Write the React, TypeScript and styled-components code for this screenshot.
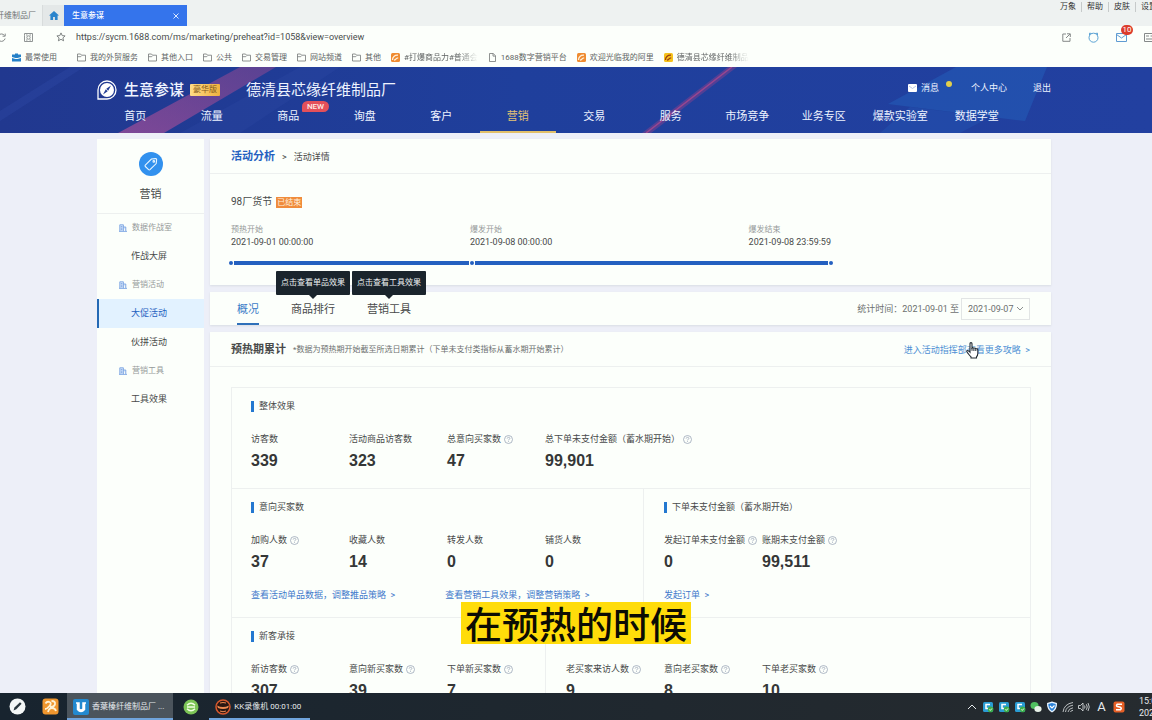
import React from "react";
import styled, { createGlobalStyle, css } from "styled-components";

const color = {
  card: "#fcfffb",
  page: "#edeff8",
  line: "#edf0ef",
  blue: "#2460c0",
  link: "#3f79cb",
  accent: "#2478d0",
  text: "#484a4a",
  muted: "#969a9a",
};

const GlobalStyle = createGlobalStyle`
  *, *::before, *::after { box-sizing: border-box; }
  html, body, #root { height: 100%; }
  body {
    margin: 0;
    overflow: hidden;
    font-family: Roboto, "Noto Sans CJK SC", sans-serif;
    font-size: 9px;
    line-height: 12px;
    color: ${color.text};
    background: ${color.page};
  }
  button, input, select { font: inherit; color: inherit; border: 0; padding: 0; margin: 0; background: none; }
  a { color: inherit; text-decoration: none; }
  h1, h2, h3, p, ul, dl, dd { margin: 0; padding: 0; font-size: inherit; font-weight: inherit; list-style: none; }
  svg { display: block; flex: none; }
`;

const Screen = styled.div`
  position: relative;
  display: flex;
  flex-direction: column;
  height: 100vh;
  overflow: hidden;
`;

/* ---------- browser chrome ---------- */

const TabStrip = styled.div`
  flex: none;
  display: flex;
  align-items: flex-end;
  height: 26px;
  overflow: hidden;
  font-size: 8px;
  background: #eef2f1;
`;

const BrowserTab = styled.button<{ $active?: boolean }>`
  display: flex;
  align-items: center;
  justify-content: space-between;
  height: 21px;
  padding: 0 8px;
  white-space: nowrap;
  ${(p) =>
    p.$active
      ? css`
          width: 123px;
          color: #fff;
          font-weight: 500;
          background: #3474ec;
        `
      : css`
          color: #6c7070;
        `}
`;

const ClippedTab = styled(BrowserTab)`
  width: 42px;
  justify-content: flex-end;
  padding: 0 6px 0 0;
`;

const HomeTab = styled(BrowserTab)`
  width: 22px;
  padding: 0;
  justify-content: center;
  background: #e4e8e8;
  border-left: 1px solid #d8dcdc;
`;

const MenuLinks = styled.div`
  display: flex;
  align-self: flex-start;
  align-items: center;
  margin: 2px -10px 0 auto;
  color: #333;
  button {
    padding: 0 5px;
    line-height: 10px;
    white-space: nowrap;
  }
  button + button {
    border-left: 1px solid #c6caca;
  }
`;

const AddressBar = styled.div`
  flex: none;
  display: flex;
  align-items: center;
  height: 22px;
  background: ${color.card};
`;

const BarIcons = styled.div`
  display: flex;
  align-items: center;
  gap: 18px;
  margin-left: -3px;
  color: #858989;
`;

const BarTools = styled(BarIcons)`
  gap: 17px;
  margin: 0 -2px 0 0;
`;

const StarButton = styled.button`
  margin-left: 23px;
`;

const UrlInput = styled.input`
  flex: 1;
  min-width: 0;
  height: 16px;
  padding-left: 10px;
  color: #484c4c;
  outline: 0;
`;

const MailButton = styled.button`
  position: relative;
  color: #5f9bd2;
`;

const MailBadge = styled.span`
  position: absolute;
  left: 5px;
  top: -8px;
  width: 12px;
  height: 10px;
  border-radius: 5px;
  font-size: 8px;
  line-height: 10px;
  color: #fff;
  background: #dc3c2c;
`;

const Bookmarks = styled.nav`
  flex: none;
  display: flex;
  align-items: center;
  gap: 10px;
  height: 19px;
  padding: 0 0 0 12px;
  font-size: 8px;
  color: #606464;
  background: ${color.card};
`;

const Bookmark = styled.a<{ $first?: boolean; $faded?: boolean }>`
  display: flex;
  align-items: center;
  gap: 4px;
  white-space: nowrap;
  ${(p) => p.$first && "margin-right: 10px;"}
  ${(p) =>
    p.$faded &&
    css`
      max-width: 90px;
      overflow: hidden;
      mask-image: linear-gradient(90deg, #000 76%, transparent);
    `}
`;

/* ---------- site header ---------- */

const Header = styled.header`
  position: relative;
  flex: none;
  height: 66px;
  padding-right: 4px;
  color: #eef3ff;
  background: linear-gradient(90deg, #21388f, #1f3f9c 45%, #2240a0);
`;

const HeaderArt = styled.svg`
  position: absolute;
  inset: 0;
  width: 100%;
  height: 100%;
`;

const Container = styled.div`
  position: relative;
  width: 100%;
  max-width: 954px;
  margin: 0 auto;
`;

const BrandRow = styled.div`
  display: flex;
  align-items: center;
  height: 33px;
  padding-top: 13px;
`;

const Brand = styled.h1`
  display: flex;
  align-items: center;
  gap: 7px;
  font-size: 15px;
  font-weight: 500;
  line-height: 20px;
`;

const EditionTag = styled.span`
  height: 12px;
  margin: 0 26px 0 6px;
  padding: 0 3px;
  border-radius: 1px;
  font-size: 8px;
  color: #83591a;
  background: linear-gradient(90deg, #ffdc86, #f0b13f);
`;

const ShopName = styled.span`
  font-size: 15px;
  line-height: 20px;
`;

const AccountLinks = styled.nav`
  display: flex;
  align-items: center;
  gap: 26px;
  margin: -4px 0 0 auto;
  a {
    display: flex;
    gap: 4px;
    align-items: center;
  }
`;

const UnreadDot = styled.i`
  width: 6px;
  height: 6px;
  margin: -9px -7px 0 3px;
  border-radius: 50%;
  background: #e2cf4b;
`;

const MainNav = styled.nav`
  display: flex;
  height: 33px;
  padding-right: 36px;
`;

const NavLink = styled.a<{ $active?: boolean }>`
  position: relative;
  flex: 1;
  font-size: 11px;
  line-height: 34px;
  text-align: center;
  white-space: nowrap;
  ${(p) => p.$active && "color: #e4c374; box-shadow: inset 0 -2px #e2c06a;"}
`;

const NewBadge = styled.span`
  position: absolute;
  left: 52px;
  top: 1px;
  width: 27px;
  height: 11px;
  border-radius: 6px 6px 6px 1px;
  font-size: 8px;
  line-height: 11px;
  font-weight: 500;
  color: #ffe9e4;
  background: #e4505a;
`;

/* ---------- page body ---------- */

const Viewport = styled.main`
  flex: 1;
  min-height: 0;
  overflow: hidden;
  padding: 6px 4px 0 0;
`;

const Columns = styled(Container)`
  display: flex;
  align-items: stretch;
  gap: 6px;
`;

const Sidebar = styled.aside`
  flex: none;
  width: 107px;
  background: ${color.card};
`;

const SidebarHead = styled.div`
  display: flex;
  flex-direction: column;
  align-items: center;
  gap: 11px;
  height: 75px;
  padding-top: 13px;
  border-bottom: 1px solid ${color.line};
  font-size: 11px;
  line-height: 16px;
`;

const RoundIcon = styled.span`
  display: grid;
  place-items: center;
  width: 24px;
  height: 24px;
  border-radius: 50%;
  color: #e8f6ff;
  background: #3291ee;
`;

const SideGroup = styled.h3`
  display: flex;
  align-items: center;
  gap: 5px;
  height: 28px;
  padding-left: 22px;
  font-size: 8px;
  color: ${color.muted};
`;

const SideLink = styled.a<{ $active?: boolean }>`
  display: block;
  height: 29px;
  padding-left: 34px;
  line-height: 29px;
  ${(p) =>
    p.$active &&
    css`
      color: ${color.blue};
      background: #e2f2ff;
      box-shadow: inset 2px 0 #2468b4;
    `}
`;

const Main = styled.div`
  flex: 1;
  min-width: 0;
  display: flex;
  flex-direction: column;
  gap: 7px;
`;

const Card = styled.section`
  background: ${color.card};
  box-shadow: 0 1px 2px #d9dde4;
`;

const CardHead = styled.div`
  display: flex;
  align-items: center;
  gap: 7px;
  height: 35px;
  padding: 2px 21px 0;
  border-bottom: 1px solid ${color.line};
`;

const Crumb = styled.a`
  font-size: 11px;
  font-weight: 700;
  color: ${color.blue};
`;

const EventBody = styled.div`
  padding: 21px 20px 20px 21px;
`;

const EventTitle = styled.h2`
  display: flex;
  align-items: center;
  gap: 4px;
  height: 14px;
  font-size: 10px;
`;

const EndedTag = styled.span`
  height: 11px;
  padding: 0 1px;
  font-size: 8px;
  line-height: 11px;
  color: #fff1df;
  background: #f08c3c;
`;

const Timeline = styled.div`
  width: 75%;
  margin-top: 14px;
`;

const Stages = styled.ol`
  display: flex;
  margin: 0;
  padding: 0;
  list-style: none;
`;

const Stage = styled.li<{ $share: number }>`
  flex: ${(p) => p.$share} 1 0;
  white-space: nowrap;
  line-height: 13px;
  small {
    display: block;
    font-size: 8px;
    color: ${color.muted};
  }
`;

const LastStage = styled(Stage)`
  flex: none;
`;

const Track = styled.div`
  display: flex;
  align-items: center;
  gap: 1px;
  margin: 12px -2px 0;
`;

const TrackDot = styled.i`
  width: 4px;
  height: 4px;
  border-radius: 50%;
  background: ${color.blue};
`;

const TrackBar = styled.i<{ $share: number }>`
  flex: ${(p) => p.$share};
  height: 4px;
  background: ${color.blue};
`;

const TabsCard = styled(Card)`
  display: flex;
  align-items: center;
  height: 33px;
  padding: 0 21px 0 27px;
`;

const Tabs = styled.div`
  display: flex;
  gap: 32px;
  margin-right: auto;
`;

const Tab = styled.button<{ $active?: boolean }>`
  position: relative;
  height: 33px;
  padding-top: 2px;
  font-size: 11px;
  white-space: nowrap;
  ${(p) => p.$active && "color: #3d7cc8; box-shadow: inset 0 -2px #2f70ba;"}
`;

const Tooltip = styled.span`
  position: absolute;
  left: 50%;
  bottom: 30px;
  transform: translateX(-50%);
  padding: 0 5px;
  border-radius: 1px;
  font-size: 8px;
  line-height: 24px;
  color: #eef2f2;
  background: #1a242c;
  &::after {
    content: "";
    position: absolute;
    left: 50%;
    top: 100%;
    margin-left: -4px;
    border: 4px solid transparent;
    border-top-color: #1a242c;
    border-bottom: 0;
  }
`;

const DateLabel = styled.label`
  display: flex;
  align-items: center;
  gap: 2px;
  color: #6c6f6f;
`;

const SelectBox = styled.span`
  position: relative;
  display: flex;
  align-items: center;
  border: 1px solid #e2e5e5;
  select {
    width: 67px;
    height: 20px;
    padding-left: 6px;
    appearance: none;
  }
  svg {
    position: absolute;
    right: 5px;
    pointer-events: none;
  }
`;

const PeriodTitle = styled.h2`
  font-size: 11px;
  font-weight: 700;
`;

const Note = styled.span`
  font-size: 8px;
  color: #6c7070;
`;

const GuideLink = styled.a`
  position: relative;
  margin-left: auto;
  color: #4d8fd4;
`;

const HandCursor = styled.svg`
  position: absolute;
  left: 62px;
  top: -2px;
`;

const Board = styled.div`
  margin: 20px 20px 40px 21px;
  border: 1px solid ${color.line};
`;

const BoardRow = styled.div`
  display: flex;
  & + & {
    border-top: 1px solid ${color.line};
  }
`;

const Panel = styled.section`
  padding: 11px 0 16px 19px;
  & + & {
    border-left: 1px solid ${color.line};
    padding-left: 20px;
  }
`;

const PanelTitle = styled.h3`
  display: flex;
  align-items: center;
  gap: 5px;
  line-height: 14px;
  &::before {
    content: "";
    width: 3px;
    height: 11px;
    background: ${color.accent};
  }
`;

const Metrics = styled.dl`
  display: flex;
  margin-top: 19px;
`;

const Metric = styled.div`
  width: 98px;
  white-space: nowrap;
  dt {
    display: flex;
    align-items: center;
    gap: 3px;
    height: 14px;
  }
  dd {
    margin-top: 4px;
    font-family: "Liberation Sans", Arial, sans-serif;
    font-size: 16px;
    font-weight: 700;
    line-height: 22px;
    color: #353737;
  }
`;

const PanelLinks = styled.div`
  display: flex;
  gap: 50px;
  margin-top: 16px;
  color: ${color.link};
  white-space: nowrap;
`;

/* ---------- overlay and taskbar ---------- */

const Caption = styled.p`
  position: absolute;
  left: 50%;
  bottom: 76px;
  transform: translateX(-50%);
  padding: 0 4px;
  font-family: "Noto Sans CJK SC", sans-serif;
  font-size: 37px;
  font-weight: 500;
  line-height: 42px;
  white-space: nowrap;
  color: #0c0c04;
  background: #ffdc0a;
`;

const Taskbar = styled.footer`
  flex: none;
  display: flex;
  align-items: center;
  height: 27px;
  padding-left: 9px;
  overflow: hidden;
  color: #e6eaec;
  background: linear-gradient(90deg, #18242f, #262b2f);
`;

const TaskButton = styled.button<{ $selected?: boolean; $wide?: boolean }>`
  display: flex;
  align-items: center;
  gap: 3px;
  height: 27px;
  white-space: nowrap;
  font-size: ${(p) => (p.$wide ? "8px" : "9px")};
  ${(p) => p.$wide && "padding: 0 9px 0 6px; box-shadow: inset 0 -2px #70a4dc;"}
  ${(p) => p.$selected && "background: #4b545c;"}
`;

const PinnedApps = styled.div`
  display: flex;
  align-items: center;
  gap: 16px;
  margin-right: 8px;
`;

const OpenApps = styled.div`
  display: flex;
  align-items: center;
  gap: 10px;
`;

const Tray = styled.div`
  display: flex;
  align-items: center;
  gap: 4px;
  margin: 0 14px 0 auto;
`;

const InputMode = styled.span`
  width: 15px;
  text-align: center;
  font-size: 13px;
`;

const Clock = styled.time`
  width: 13px;
  text-align: left;
  white-space: nowrap;
`;

/* ---------- drawings ---------- */

const Folder = () => (
  <svg width="9" height="9" viewBox="0 0 9 9" fill="none" stroke="#737777">
    <path d="M.5 1h3l1 1.2h4v5.8h-8zM.5 3.7h3.2l.8-.9" strokeWidth=".8" />
  </svg>
);

const Ali = ({ yellow }: { yellow?: boolean }) => (
  <svg width="9" height="9" viewBox="0 0 9 9">
    <rect width="9" height="9" rx="1.5" fill={yellow ? "#f5c21c" : "#ef8b30"} />
    <path
      d="M1.5 7c0-3 2-5 5.5-4.8M3 7.2c2.2 0 1.4-2.2 4.2-2.4"
      stroke={yellow ? "#9c3e12" : "#fff0da"}
      strokeWidth="1.3"
      fill="none"
    />
  </svg>
);

const Doc = () => (
  <svg width="9" height="9" viewBox="0 0 9 9" fill="none" stroke="#737777" strokeWidth=".8">
    <path d="M1.5.5h3.8l2.2 2.3v5.7h-6zM5 .6v2.5h2.4" />
  </svg>
);

const Help = () => (
  <svg width="9" height="9" viewBox="0 0 9 9" fill="none" stroke="#9aa6b8" strokeWidth=".8">
    <circle cx="4.5" cy="4.5" r="4" />
    <path d="M3.2 3.6c0-1.8 2.7-1.6 2.7-.2 0 .9-1.4.9-1.4 2M4.5 6.2v.8" />
  </svg>
);

const Building = () => (
  <svg width="8" height="8" viewBox="0 0 8 8" fill="#d5e5fa" stroke="#7aa4e2">
    <path d="M.8 7.2V.8h3.6v6.4M4.4 3h2.4v4.2M0 7.4h8M1.8 2.6h1.6M1.8 4.2h1.6M1.8 5.7h1.6" strokeWidth=".9" />
  </svg>
);

const Guard = () => (
  <svg width="12" height="12" viewBox="0 0 12 12">
    <rect x="1" y="1" width="10" height="10" rx="1.5" fill="#2a9cd4" />
    <path d="M8 3.5H4v4h3" stroke="#fff" strokeWidth="1.5" fill="none" />
    <circle cx="8.6" cy="8.4" r="2.8" fill="#3cae4c" />
    <path d="m7.3 8.4 1 1 1.6-1.9" stroke="#fff" fill="none" strokeWidth=".9" />
  </svg>
);

/* ---------- data ---------- */

const navItems = ["首页", "流量", "商品", "询盘", "客户", "营销", "交易", "服务", "市场竞争", "业务专区", "爆款实验室", "数据学堂"];

const sideMenu = [
  { group: "数据作战室", links: ["作战大屏"] },
  { group: "营销活动", links: ["大促活动", "伙拼活动"] },
  { group: "营销工具", links: ["工具效果"] },
];

type MetricData = { label: string; value: string; help?: boolean };
type PanelData = { title?: string; metrics: MetricData[]; links?: string[] };

const m = (label: string, value: string, help = false): MetricData => ({ label, value, help });

const board: PanelData[][] = [
  [
    {
      title: "整体效果",
      metrics: [
        m("访客数", "339"),
        m("活动商品访客数", "323"),
        m("总意向买家数", "47", true),
        m("总下单未支付金额（蓄水期开始）", "99,901", true),
      ],
    },
  ],
  [
    {
      title: "意向买家数",
      metrics: [m("加购人数", "37", true), m("收藏人数", "14"), m("转发人数", "0"), m("铺货人数", "0")],
      links: ["查看活动单品数据，调整推品策略", "查看营销工具效果，调整营销策略"],
    },
    {
      title: "下单未支付金额（蓄水期开始）",
      metrics: [m("发起订单未支付金额", "0", true), m("账期未支付金额", "99,511", true)],
      links: ["发起订单"],
    },
  ],
  [
    {
      title: "新客承接",
      metrics: [m("新访客数", "307", true), m("意向新买家数", "39", true), m("下单新买家数", "7", true)],
    },
    {
      metrics: [m("老买家来访人数", "9", true), m("意向老买家数", "8", true), m("下单老买家数", "10", true)],
    },
  ],
];

const UntitledSpace = styled.div`
  height: 14px;
`;

const BoardPanel = ({ title, metrics, links }: PanelData) => (
  <Panel>
    {title ? <PanelTitle>{title}</PanelTitle> : <UntitledSpace />}
    <Metrics>
      {metrics.map((item) => (
        <Metric key={item.label}>
          <dt>
            {item.label}
            {item.help && <Help />}
          </dt>
          <dd>{item.value}</dd>
        </Metric>
      ))}
    </Metrics>
    {links && (
      <PanelLinks>
        {links.map((text) => (
          <a href="#" key={text}>
            {text} &nbsp;&gt;
          </a>
        ))}
      </PanelLinks>
    )}
  </Panel>
);

export default function App() {
  return (
    <Screen>
      <GlobalStyle />
      <TabStrip>
        <ClippedTab>纤维制品厂</ClippedTab>
        <HomeTab aria-label="主页">
          <svg width="10" height="9" viewBox="0 0 10 9">
            <path d="M5 0 0 4.6h1.4V9h2.7V6h1.8v3h2.7V4.6H10z" fill="#2a84cc" />
          </svg>
        </HomeTab>
        <BrowserTab $active>
          生意参谋
          <svg width="6" height="6" viewBox="0 0 6 6" stroke="#dbe9ff">
            <path d="m.5.5 5 5m0-5-5 5" />
          </svg>
        </BrowserTab>
        <MenuLinks>
          {["万象", "帮助", "皮肤", "设置"].map((t) => (
            <button key={t}>{t}</button>
          ))}
        </MenuLinks>
      </TabStrip>

      <AddressBar>
        <BarIcons>
          <svg width="9" height="9" viewBox="0 0 9 9" fill="none" stroke="currentColor">
            <path d="M7.5 2.5a3.7 3.7 0 1 0 .6 3M8.2.6v2.6H5.6" />
          </svg>
          <svg width="9" height="9" viewBox="0 0 9 9" fill="none" stroke="currentColor" strokeWidth=".9">
            <path d="M.5 2.5v-2h8v8h-8zM2 2h1.5M5.5 2H7M2 7h1.5M5.5 7H7" />
            <circle cx="4.5" cy="4.5" r="1.7" />
          </svg>
        </BarIcons>
        <StarButton aria-label="收藏">
          <svg width="10" height="10" viewBox="0 0 10 10" fill="none" stroke="#737777" strokeWidth=".9">
            <path d="m5 .9 1.2 2.7 2.9.3-2.2 2 .7 2.9L5 7.3 2.4 8.8l.7-2.900-2.200-2 2.900-.3z" />
          </svg>
        </StarButton>
        <UrlInput aria-label="地址" defaultValue="https://sycm.1688.com/ms/marketing/preheat?id=1058&view=overview" />
        <BarTools>
          <svg width="9" height="9" viewBox="0 0 9 9" fill="none" stroke="currentColor">
            <path d="M4 1H.8v7.3H8V5M5 .8h3.3V4M8 1 4 5" />
          </svg>
          <svg width="11" height="11" viewBox="0 0 11 11" fill="none" stroke="#5aa2d4">
            <circle cx="5.5" cy="5.700" r="4.500" />
            <path d="M1.500 3V1.200l2.200.3M9.500 3V1.200l-2.200.3" />
          </svg>
          <MailButton aria-label="邮件">
            <svg width="11" height="9" viewBox="0 0 11 9" fill="none" stroke="currentColor">
              <path d="M.5.5h10v8H.5zm0 1 5 3.500 5-3.500" />
            </svg>
            <MailBadge>10</MailBadge>
          </MailButton>
          <svg width="10" height="9" viewBox="0 0 10 9" fill="none" stroke="currentColor">
            <path d="M.5.5h9v8h-9zM2 3h3M2 6h6M6.500 3H8" />
          </svg>
        </BarTools>
      </AddressBar>

      <Bookmarks>
        <Bookmark href="#" $first>
          <svg width="9" height="9" viewBox="0 0 9 9">
            <path d="M3 1.500V.6h3v.9h3V4L5.500 5h-2L0 4V1.500zM0 5l3.500 1h2L9 5v3.500H0z" fill="#2480c8" />
          </svg>
          最常使用
        </Bookmark>
        {["我的外贸服务", "其他入口", "公共", "交易管理", "网站频道", "其他"].map((t) => (
          <Bookmark href="#" key={t}>
            <Folder />
            {t}
          </Bookmark>
        ))}
        <Bookmark href="#" $faded>
          <Ali />
          #打爆商品力#普通会
        </Bookmark>
        <Bookmark href="#">
          <Doc />
          1688数字营销平台
        </Bookmark>
        <Bookmark href="#">
          <Ali />
          欢迎光临我的阿里
        </Bookmark>
        <Bookmark href="#" $faded>
          <Ali yellow />
          德清县芯缘纤维制品
        </Bookmark>
      </Bookmarks>

      <Header>
        <HeaderArt viewBox="0 0 1152 66" preserveAspectRatio="none" aria-hidden="true">
          <defs>
            <linearGradient id="band" x1="1" y1="0" x2="0" y2="1">
              <stop offset="0" stopColor="#a04a90" stopOpacity=".45" />
              <stop offset="1" stopColor="#b0509a" stopOpacity=".65" />
            </linearGradient>
          </defs>
          <path d="M240 0h36L164 66h-46z" fill="url(#band)" />
          <path d="M300 0h40L240 66h-60z" fill="#3a58b8" opacity=".15" />
          <path d="M0 44 70 0h14L0 54z" fill="#4468c8" opacity=".15" />
          <path d="M728 0h9l-86 66h-9z" fill="#a0408a" opacity=".4" />
          <path d="m732 0-86 66" stroke="#b8488c" strokeWidth="1.5" opacity=".7" />
          <path d="M956 0h91l-22 54-137-17z" fill="#2460bc" opacity=".5" />
          <path d="m910 40 80 10-30 16h-80z" fill="#2460bc" opacity=".3" />
        </HeaderArt>
        <Container>
          <BrandRow>
            <Brand>
              <svg width="20" height="20" viewBox="0 0 20 20" fill="none" stroke="#fff">
                <path d="M1 19V10a9 9 0 1 1 9 9z" strokeWidth="1.3" />
                <circle cx="10" cy="10" r="7" fill="#fff" stroke="none" />
                <path d="m14 5.500-2.800 5.200-1.900-1.900zM6 14.500l2.800-5.200 1.900 1.900z" fill="#233d94" stroke="none" />
              </svg>
              生意参谋
            </Brand>
            <EditionTag>豪华版</EditionTag>
            <ShopName>德清县芯缘纤维制品厂</ShopName>
            <AccountLinks>
              <a href="#">
                <svg width="9" height="8" viewBox="0 0 9 8">
                  <rect width="9" height="8" rx="1" fill="#fff" />
                  <path d="m1 2 3.500 2.500L8 2" stroke="#a5b8e0" fill="none" strokeWidth=".8" />
                </svg>
                消息
                <UnreadDot />
              </a>
              <a href="#">个人中心</a>
              <a href="#">退出</a>
            </AccountLinks>
          </BrandRow>
          <MainNav>
            {navItems.map((t) => (
              <NavLink href="#" key={t} $active={t === "营销"}>
                {t}
                {t === "商品" && <NewBadge>NEW</NewBadge>}
              </NavLink>
            ))}
          </MainNav>
        </Container>
      </Header>

      <Viewport>
        <Columns>
          <Sidebar>
            <SidebarHead>
              <RoundIcon>
                <svg width="16" height="16" viewBox="0 0 16 16" fill="none" stroke="currentColor" strokeWidth="1.1">
                  <path d="M2.300 9.200 8.400 3l4.300-.4q1 0 .9 1L13.200 7.600 7 13.700q-.7.6-1.400 0L2.300 10.500q-.6-.6 0-1.300z" />
                  <circle cx="10.800" cy="5.400" r=".8" />
                </svg>
              </RoundIcon>
              营销
            </SidebarHead>
            {sideMenu.map((s) => (
              <React.Fragment key={s.group}>
                <SideGroup>
                  <Building />
                  {s.group}
                </SideGroup>
                {s.links.map((t) => (
                  <SideLink href="#" key={t} $active={t === "大促活动"}>
                    {t}
                  </SideLink>
                ))}
              </React.Fragment>
            ))}
          </Sidebar>

          <Main>
            <Card>
              <CardHead>
                <Crumb href="#">活动分析</Crumb>
                <span>&gt;</span>
                <span>活动详情</span>
              </CardHead>
              <EventBody>
                <EventTitle>
                  98厂货节 <EndedTag>已结束</EndedTag>
                </EventTitle>
                <Timeline>
                  <Stages>
                    <Stage $share={240}>
                      <small>预热开始</small>2021-09-01 00:00:00
                    </Stage>
                    <Stage $share={280}>
                      <small>爆发开始</small>2021-09-08 00:00:00
                    </Stage>
                    <LastStage $share={0}>
                      <small>爆发结束</small>2021-09-08 23:59:59
                    </LastStage>
                  </Stages>
                  <Track>
                    <TrackDot />
                    <TrackBar $share={2} />
                    <TrackDot />
                    <TrackBar $share={3} />
                    <TrackDot />
                  </Track>
                </Timeline>
              </EventBody>
            </Card>

            <TabsCard>
              <Tabs>
                <Tab $active>概况</Tab>
                <Tab>
                  商品排行<Tooltip>点击查看单品效果</Tooltip>
                </Tab>
                <Tab>
                  营销工具<Tooltip>点击查看工具效果</Tooltip>
                </Tab>
              </Tabs>
              <DateLabel>
                统计时间：2021-09-01 至
                <SelectBox>
                  <select defaultValue="2021-09-07">
                    <option>2021-09-07</option>
                  </select>
                  <svg width="8" height="5" viewBox="0 0 8 5" fill="none" stroke="#8a8e8e">
                    <path d="m1 1 3 3 3-3" />
                  </svg>
                </SelectBox>
              </DateLabel>
            </TabsCard>

            <Card>
              <CardHead>
                <PeriodTitle>预热期累计</PeriodTitle>
                <Note>*数据为预热期开始截至所选日期累计（下单未支付类指标从蓄水期开始累计）</Note>
                <GuideLink href="#">
                  进入活动指挥部查看更多攻略 &nbsp;&gt;
                  <HandCursor width="13" height="17" viewBox="0 0 13 17" aria-hidden="true">
                    <path
                      d="M4 1.800q0-1.200 1-1.200t1 1.200V6q1-.8 1.800.3 1.200-.7 1.800.5Q11.500 6.300 11.800 8v3.500q0 2-1.300 3.300V16H5v-1.200Q3.300 13.300 1 10q-.6-1.300.5-1.500 1 0 2.500 1.700z"
                      fill="#fff"
                      stroke="#222b33"
                      strokeWidth="1.1"
                    />
                    <path d="M6 6v2.800M7.900 6.800v2.200M9.800 7.200V9" stroke="#222b33" fill="none" />
                  </HandCursor>
                </GuideLink>
              </CardHead>
              <Board>
                {board.map((row, i) => (
                  <BoardRow key={i}>
                    {row.map((p, j) => (
                      <BoardPanel key={j} {...p} />
                    ))}
                  </BoardRow>
                ))}
              </Board>
            </Card>
          </Main>
        </Columns>
      </Viewport>

      <Caption>在预热的时候</Caption>

      <Taskbar>
        <PinnedApps>
          <TaskButton aria-label="画笔">
            <svg width="17" height="17" viewBox="0 0 17 17">
              <circle cx="8.5" cy="8.5" r="8" fill="#f4f7f7" />
              <path d="m4.500 12.500 1-3 5.500-5.300 1.600 1.600-5.300 5.500z" fill="#28343c" />
            </svg>
          </TaskButton>
          <TaskButton aria-label="文件管理">
            <svg width="17" height="17" viewBox="0 0 17 17">
              <rect x=".5" y=".5" width="16" height="16" rx="3" fill="#f0962e" />
              <path d="M3.500 5.500Q5 3 7.500 4t0 4-4.500 3M9.500 3q4 0 3.500 3t-5 3M6 14q1-4 4-4t4 3" stroke="#fff2d4" strokeWidth="1.8" fill="none" />
            </svg>
          </TaskButton>
        </PinnedApps>
        <OpenApps>
          <TaskButton $wide $selected>
            <svg width="16" height="16" viewBox="0 0 16 16">
              <rect width="16" height="16" rx="2" fill="#2389cf" />
              <path d="M3 4h3v6q2 2 4 0V4h3M4.500 4v6.500q3.500 4 7 0V4" stroke="#fff" strokeWidth="1.5" fill="none" />
            </svg>
            香葉榛纤维制品厂 ...
          </TaskButton>
          <TaskButton aria-label="浏览器">
            <svg width="16" height="16" viewBox="0 0 16 16" fill="none">
              <circle cx="8" cy="8" r="7.5" fill="#7cc456" />
              <path d="M4 6.300q4-4 8 0M4 9.800q4 4 8 0M4 8h8" stroke="#f2ffe4" strokeWidth="1.4" />
            </svg>
          </TaskButton>
          <TaskButton $wide>
            <svg width="16" height="16" viewBox="0 0 16 16" fill="none">
              <circle cx="8" cy="8" r="7" fill="#2a1712" stroke="#d8582c" strokeWidth="1.5" />
              <path d="M2 6.500q6 3 12 0l-1 2.500q-5 2-10 0z" fill="#ee8a50" />
              <path d="M5 12q3 1.500 6 0M5 4q3-1 6 0" stroke="#ee8a50" />
            </svg>
            KK录像机 00:01:00
          </TaskButton>
        </OpenApps>
        <Tray>
          <svg width="12" height="8" viewBox="0 0 12 8" fill="none" stroke="currentColor">
            <path d="m2 6 4-4 4 4" />
          </svg>
          <Guard />
          <Guard />
          <Guard />
          <svg width="12" height="12" viewBox="0 0 12 12">
            <ellipse cx="4.5" cy="4.5" rx="4" ry="3.5" fill="#50c060" />
            <ellipse cx="8" cy="8" rx="3.6" ry="3" fill="#e8f2e8" />
          </svg>
          <svg width="12" height="12" viewBox="0 0 12 12">
            <path d="M6 .5 11 2q.5 6.500-5 9.500Q.5 8.500 1 2z" fill="#e8f4ff" />
            <path d="M6 2 9.700 3Q9.800 7.500 6 10 2.200 7.500 2.300 3z" fill="#2c82d8" />
            <path d="m4 5 2 2 2.500-2.500" stroke="#fff" fill="none" strokeWidth="1.2" />
          </svg>
          <svg width="12" height="12" viewBox="0 0 12 12" fill="none" stroke="#b8bcbe">
            <path d="M1 11Q2 3 11 1.500M3.500 11Q4 5.500 11 4.200M6 11q.5-3.500 5-4.200M8.500 11q.3-1.500 2.500-1.700" />
          </svg>
          <svg width="12" height="12" viewBox="0 0 12 12" fill="none" stroke="#d0d4d6" strokeWidth=".9">
            <path d="M.5 4.500h2L5 2v8L2.500 7.500h-2zM6.500 4.500q1 1.500 0 3M8.300 3.200q1.900 2.800 0 5.600M10 2q2.500 4 0 8" />
          </svg>
          <InputMode>A</InputMode>
          <svg width="12" height="12" viewBox="0 0 12 12">
            <rect x=".5" y=".5" width="11" height="11" rx="2" fill="#e65f26" />
            <path d="M9 3.200H4.200q-1.500 1.600.3 2.400l3 .7q1.700 1-.2 2.500H3" stroke="#fff" strokeWidth="1.5" fill="none" />
          </svg>
        </Tray>
        <Clock>
          15:02
          <br />
          2021/9/8
        </Clock>
      </Taskbar>
    </Screen>
  );
}
